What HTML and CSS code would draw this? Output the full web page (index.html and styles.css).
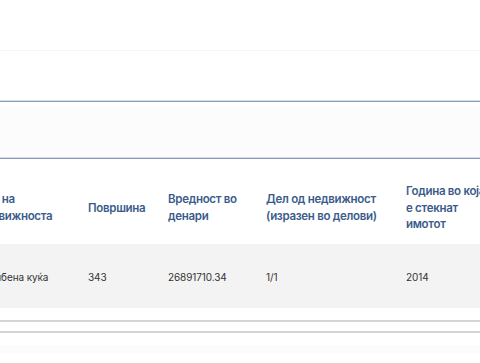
FILE: index.html
```html
<!DOCTYPE html>
<html>
<head>
<meta charset="utf-8">
<link rel="stylesheet" href="styles.css">
</head>
<body>
<div class="page">
  <div class="top"></div>
  <div class="divider-faint"></div>
  <div class="spacer"></div>
  <div class="band"></div>
  <table class="assets">
    <thead>
      <tr>
        <th class="c1">Вид на<br>недвижноста</th>
        <th class="c2">Површина</th>
        <th class="c3">Вредност во<br>денари</th>
        <th class="c4">Дел од недвижност<br>(изразен во делови)</th>
        <th class="c5">Година во која<br>е стекнат<br>имотот</th>
      </tr>
    </thead>
    <tbody>
      <tr>
        <td class="c1">Станбена куќа</td>
        <td>343</td>
        <td>26891710.34</td>
        <td>1/1</td>
        <td>2014</td>
      </tr>
    </tbody>
  </table>
  <div class="foot"></div>
  <div class="foot-band"></div>
</div>
</body>
</html>
```
FILE: styles.css
```css
html, body {
  margin: 0;
  padding: 0;
  background: #fff;
  overflow: hidden;
}
.page {
  width: 480px;
  height: 363px;
  overflow: hidden;
  font-family: Inter, "Noto Sans", sans-serif;
}
.top {
  height: 50px;
}
.divider-faint {
  height: 1px;
  background: #f6f6f6;
}
.spacer {
  height: 49px;
}
.band {
  height: 57px;
  border-top: 1px solid #d6dce6;
  border-bottom: 1px solid #8a9cc2;
  box-shadow: inset 0 1px 0 #8a9cc2, inset 0 -1px 0 #d6dce6;
  background: linear-gradient(#fff 0, #fff 6px, #fcfcfc 6px);
}
.assets {
  border-collapse: collapse;
  margin-left: -32px;
  table-layout: fixed;
  width: 600px;
}
.assets th {
  color: #3b5b8c;
  font-weight: 600;
  font-size: 11.5px;
  letter-spacing: -0.3px;
  line-height: 16.7px;
  text-align: left;
  vertical-align: middle;
  white-space: nowrap;
  padding: 24px 10px 11px;
}
.assets td {
  color: #333;
  font-size: 10px;
  letter-spacing: -0.1px;
  text-align: left;
  padding: 2px 10px 0;
  height: 62px;
  background: #f3f3f3;
  white-space: nowrap;
}
.c1 { width: 90px; }
.c2 { width: 60px; }
.c3 { width: 78px; }
.c4 { width: 120px; }
.c5 { width: 152px; }
.foot {
  margin-top: 12px;
  height: 9px;
  border-top: 2px solid #d4d4d4;
  border-bottom: 2px solid #d4d4d4;
}
.foot-band {
  margin-top: 12px;
  height: 8px;
  background: #fcfcfc;
}
```
